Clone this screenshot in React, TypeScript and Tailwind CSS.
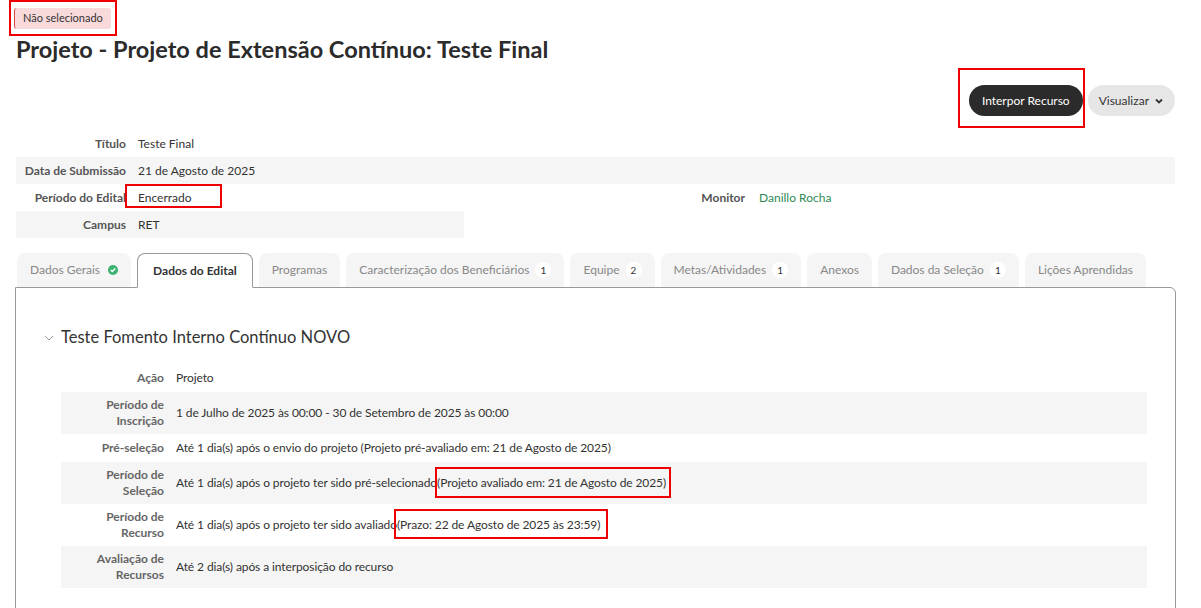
import React from "react";

const font = { fontFamily: "Lato, 'Noto Sans', sans-serif" };

function Row({ label, value, gray, labelW = "w-[110px]" }: { label: React.ReactNode; value: React.ReactNode; gray?: boolean; labelW?: string }) {
  return (
    <div className={`flex items-center min-h-[27px] ${gray ? "bg-[#f5f5f5]" : ""}`}>
      <div className={`${labelW} shrink-0 text-right font-bold text-[12px] text-[#555] leading-[15px]`}>{label}</div>
      <div className="pl-3 text-[12px] text-[#333]">{value}</div>
    </div>
  );
}

function Count({ n }: { n: number }) {
  return (
    <span className="ml-[6px] inline-flex items-center justify-center w-[16px] h-[16px] rounded-full bg-white text-[10px] text-[#333]">{n}</span>
  );
}

function Tab({ children, active }: { children: React.ReactNode; active?: boolean }) {
  if (active) {
    return (
      <div className="relative z-10 -mb-px h-[35px] px-[15px] flex items-center rounded-t-[8px] border border-[#999] border-b-white bg-white text-[12px] font-bold text-[#333]">
        {children}
      </div>
    );
  }
  return (
    <div className="h-[34px] px-[13px] flex items-center rounded-t-[8px] bg-[#f5f5f5] text-[12px] text-[#888]">{children}</div>
  );
}

function DRow({ label, value, gray }: { label: React.ReactNode; value: React.ReactNode; gray?: boolean }) {
  return (
    <div className={`flex items-center min-h-[28px] py-[5px] ${gray ? "bg-[#f5f5f5]" : ""}`}>
      <div className="w-[103px] shrink-0 text-right font-bold text-[12px] text-[#666] leading-[16px]">{label}</div>
      <div className="pl-3 text-[12px] leading-[18px] tracking-[-0.1px] text-[#333]">{value}</div>
    </div>
  );
}

export default function App() {
  return (
    <div className="w-[1201px] h-[608px] overflow-hidden bg-white" style={font}>
      <div className="pt-[8px] pl-[14px] flex">
        <div className="relative flex">
          <span className="absolute -left-[5px] -top-[8px] w-[108px] h-[36px] border-2 border-[#e00] pointer-events-none" />
          <div className="flex items-center h-[21px] px-[8px] rounded-[3px] bg-[#f9dada] border-l border-l-[#d44] text-[11px] text-[#333]">Não selecionado</div>
        </div>
      </div>
      <h1 className="mt-[6px] pl-[16px] text-[23.5px] leading-[28px] font-bold text-[#2b2b2b]">Projeto - Projeto de Extensão Contínuo: Teste Final</h1>

      <div className="mt-[22px] flex justify-end pr-[26px] gap-[5px]">
        <div className="relative">
          <span className="absolute -left-[11px] -top-[17px] w-[127px] h-[60px] border-2 border-[#e00] pointer-events-none" />
          <button className="h-[31px] px-[13px] rounded-full bg-[#2b2b2b] text-white text-[12px]">Interpor Recurso</button>
        </div>
        <button className="h-[31px] pl-[11px] pr-[12px] rounded-full bg-[#e6e6e6] text-[#333] text-[12px] flex items-center gap-[6px]">
          Visualizar
          <svg width="8" height="6" viewBox="0 0 8 6"><path d="M1 1.5 L4 4.5 L7 1.5" stroke="#333" strokeWidth="1.8" fill="none" /></svg>
        </button>
      </div>

      <div className="mt-[14px] mx-[16px] w-[1159px]">
        <Row label="Título" value="Teste Final" />
        <Row label="Data de Submissão" value="21 de Agosto de 2025" gray />
        <div className="flex">
          <div className="w-[448px]">
            <Row
              label="Período do Edital"
              value={
                <span className="relative">
                  <span className="absolute -left-[13px] -top-[6px] w-[97px] h-[24px] border-2 border-[#e00]" />
                  Encerrado
                </span>
              }
            />
            <Row label="Campus" value="RET" gray />
          </div>
          <div className="ml-[171px]">
            <div className="flex items-center h-[27px]">
              <div className="w-[110px] text-right font-bold text-[12px] text-[#555]">Monitor</div>
              <div className="pl-[14px] text-[12px] text-[#2e8b57]">Danillo Rocha</div>
            </div>
          </div>
        </div>
      </div>

      <div className="mt-[15px] pl-[17px] flex items-end gap-[6px]">
        <Tab>
          Dados Gerais
          <svg className="ml-2" width="10" height="10" viewBox="0 0 10 10">
            <circle cx="5" cy="5" r="5" fill="#3cb371" />
            <path d="M2.7 5.1 L4.3 6.6 L7.3 3.6" stroke="white" strokeWidth="1.4" fill="none" />
          </svg>
        </Tab>
        <Tab active>Dados do Edital</Tab>
        <Tab>Programas</Tab>
        <Tab>Caracterização dos Beneficiários<Count n={1} /></Tab>
        <Tab>Equipe<Count n={2} /></Tab>
        <Tab>Metas/Atividades<Count n={1} /></Tab>
        <Tab>Anexos</Tab>
        <Tab>Dados da Seleção<Count n={1} /></Tab>
        <Tab>Lições Aprendidas</Tab>
      </div>

      <div className="mx-[15px] w-[1161px] h-[400px] border border-[#999] rounded-tr-[6px] pt-[38px] px-[30px]">
        <div className="flex items-center gap-[6px]">
          <svg width="10" height="6" viewBox="0 0 10 6" className="ml-[-2px] mt-[2px]"><path d="M1 1 L5 5 L9 1" stroke="#999" strokeWidth="1" fill="none" /></svg>
          <h2 className="ml-[1px] text-[16.5px] text-[#333] leading-[22px]">Teste Fomento Interno Contínuo NOVO</h2>
        </div>
        <div className="mt-[16px] ml-[15px] w-[1086px]">
          <DRow label="Ação" value="Projeto" />
          <DRow label={<>Período de<br />Inscrição</>} value="1 de Julho de 2025 às 00:00 - 30 de Setembro de 2025 às 00:00" gray />
          <DRow label="Pré-seleção" value="Até 1 dia(s) após o envio do projeto (Projeto pré-avaliado em: 21 de Agosto de 2025)" />
          <DRow
            label={<>Período de<br />Seleção</>}
            value={
              <span>
                Até 1 dia(s) após o projeto ter sido pré-selecionado
                <span className="relative">
                  <span className="absolute -left-[2px] -top-[8px] w-[236px] h-[31px] border-2 border-[#e00]" />
                  (Projeto avaliado em: 21 de Agosto de 2025)
                </span>
              </span>
            }
            gray
          />
          <DRow
            label={<>Período de<br />Recurso</>}
            value={
              <span>
                Até 1 dia(s) após o projeto ter sido avaliado
                <span className="relative">
                  <span className="absolute -left-[3px] -top-[8px] w-[214px] h-[30px] border-2 border-[#e00]" />
                  (Prazo: 22 de Agosto de 2025 às 23:59)
                </span>
              </span>
            }
          />
          <DRow label={<>Avaliação de<br />Recursos</>} value="Até 2 dia(s) após a interposição do recurso" gray />
        </div>
      </div>
    </div>
  );
}
